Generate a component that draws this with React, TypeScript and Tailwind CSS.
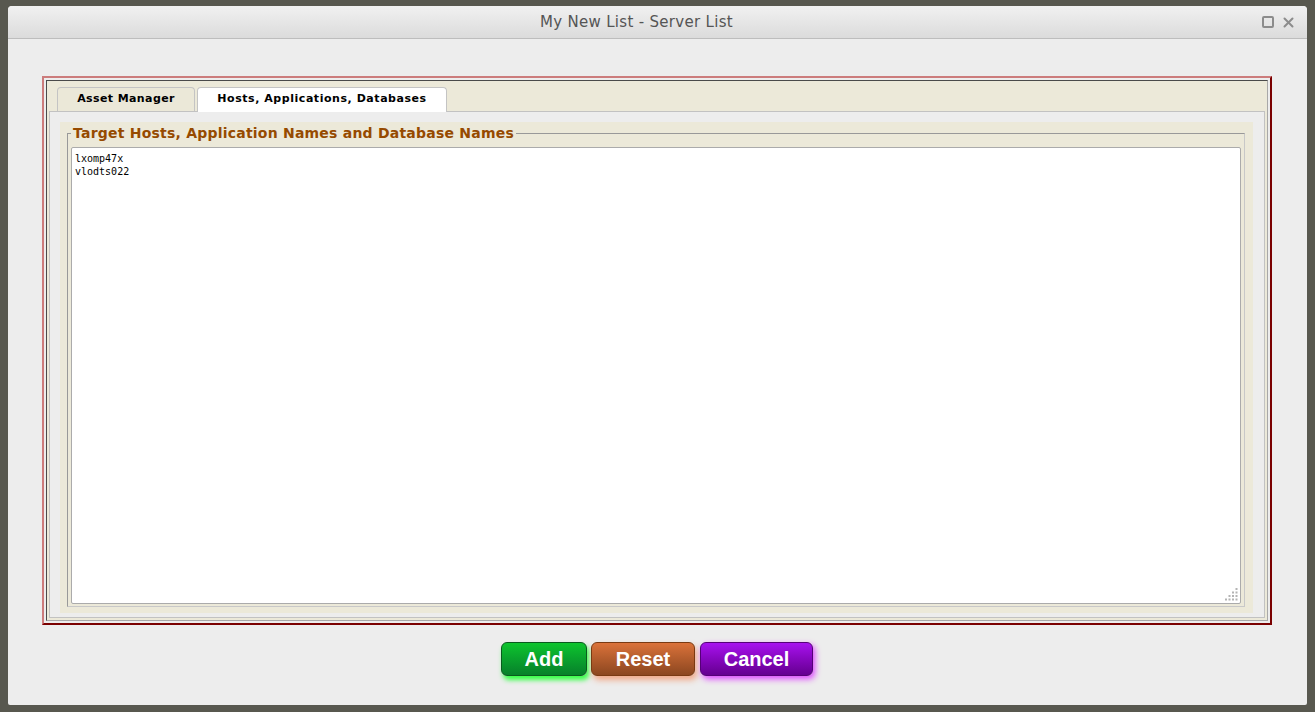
import React from "react";

function Grip() {
  const dots: [number, number][] = [];
  for (let r = 0; r < 4; r++) {
    for (let c = 3 - r; c < 4; c++) {
      dots.push([c * 3.5, r * 3.5]);
    }
  }
  return (
    <svg width="14" height="14" viewBox="0 0 14 14" className="absolute right-[1px] bottom-[1px]">
      {dots.map(([x, y], i) => (
        <rect key={i} x={x} y={y} width="2" height="2" fill="#b4b4b4" />
      ))}
    </svg>
  );
}

export default function App() {
  return (
    <div className="w-[1315px] h-[712px] bg-[#58584f] pt-[6px] pl-[8px] overflow-hidden">
      <div className="w-[1299px] h-[699px] bg-[#ededed] rounded-t-[4px] rounded-b-[2px] flex flex-col">
        {/* Title bar */}
        <div className="h-[33px] shrink-0 rounded-t-[4px] bg-gradient-to-b from-[#f1f1f1] to-[#dbdbdb] border-b border-[#bdbdbd] relative flex items-center justify-center pr-[42px]">
          <span className="text-[15px] text-[#555555] font-['DejaVu_Sans',sans-serif] tracking-[0.3px]">
            My New List - Server List
          </span>
          <div className="absolute right-[13px] top-[10px] flex items-center gap-[9px]">
            <svg width="12" height="12" viewBox="0 0 12 12">
              <rect x="1" y="1" width="10" height="10" rx="1" fill="none" stroke="#8c8c8c" strokeWidth="2" />
            </svg>
            <svg width="11" height="11" viewBox="0 0 11 11">
              <path d="M1.5 1.5 L9.5 9.5 M9.5 1.5 L1.5 9.5" stroke="#8c8c8c" strokeWidth="2" strokeLinecap="round" />
            </svg>
          </div>
        </div>

        {/* Body */}
        <div className="flex-1 flex flex-col pt-[37px] pl-[34px]">
          {/* Red outset box */}
          <div className="w-[1230px] h-[549px] border-2 border-t-[#cc7c7c] border-l-[#cc7c7c] border-r-[#7a0000] border-b-[#7a0000] p-[2px] flex">
            <div className="flex-1 flex flex-col border border-t-[#4a4a4a] border-l-[#4a4a4a] border-r-[#a8a8a8] border-b-[#a8a8a8] bg-[#ece9d9]">
              {/* Tab bar */}
              <div className="h-[30px] shrink-0 flex items-end pl-[10px] gap-[2px] font-['DejaVu_Sans',sans-serif] font-bold text-[11px] text-black">
                <div className="h-[24px] w-[138px] flex items-center justify-center border border-b-0 border-[#c4c4c4] rounded-t-[4px] bg-[#ebe8d8] tracking-[0.4px]">
                  Asset Manager
                </div>
                <div className="h-[25px] w-[250px] -mb-px relative z-10 flex items-center justify-center border border-b-0 border-[#c4c4c4] rounded-t-[4px] bg-white tracking-[0.55px] pb-[1px]">
                  Hosts, Applications, Databases
                </div>
              </div>
              {/* Panel */}
              <div className="flex-1 mx-[2px] mb-[2px] border border-[#c2c2c2] bg-[#ededed] pt-[10px] pl-[10px] pr-[11px] pb-[4px] flex">
                <div className="flex-1 bg-[#ece9d9] pl-[7px] pr-[8px] pb-[6px] pt-[2px] flex">
                  <fieldset className="flex-1 border border-t-[#999999] border-l-[#999999] border-r-[#c8c8c8] border-b-[#c8c8c8] px-[3px] pb-[2px] flex flex-col min-w-0">
                    <legend className="ml-0 px-[2px] text-[14px] leading-[18px] font-bold text-[#964a00] font-['DejaVu_Sans',sans-serif] tracking-[0.22px]">
                      Target Hosts, Application Names and Database Names
                    </legend>
                    <div className="relative flex-1 mt-[5px] bg-white border border-[#ababab] rounded-[2px] pl-[3px] pt-[4px] font-['DejaVu_Sans_Mono',monospace] text-[10px] leading-[13px] text-black whitespace-pre">
                      {"lxomp47x\nvlodts022"}
                      <Grip />
                    </div>
                  </fieldset>
                </div>
              </div>
            </div>
          </div>

          {/* Buttons */}
          <div className="w-[1230px] flex justify-center gap-[4px] mt-[17px] font-['Liberation_Sans',Arial,sans-serif] font-bold text-[20px] text-white [text-shadow:2px_2px_1px_#111]">
            <button className="w-[86px] h-[34px] rounded-[6px] border border-[#0a5a1e] bg-gradient-to-b from-[#0dc52d] to-[#07802a] shadow-[2px_4px_5px_#33ff44] flex items-center justify-center">
              Add
            </button>
            <button className="w-[104px] h-[34px] rounded-[6px] border border-[#7a3a12] bg-gradient-to-b from-[#db723a] to-[#8c4720] shadow-[2px_4px_6px_#f0a888] flex items-center justify-center">
              Reset
            </button>
            <button className="w-[113px] h-[34px] rounded-[6px] border border-[#560078] bg-gradient-to-b from-[#a812ef] to-[#650090] shadow-[2px_3px_6px_#dd44ff] flex items-center justify-center ml-[1px]">
              Cancel
            </button>
          </div>
        </div>
      </div>
    </div>
  );
}
